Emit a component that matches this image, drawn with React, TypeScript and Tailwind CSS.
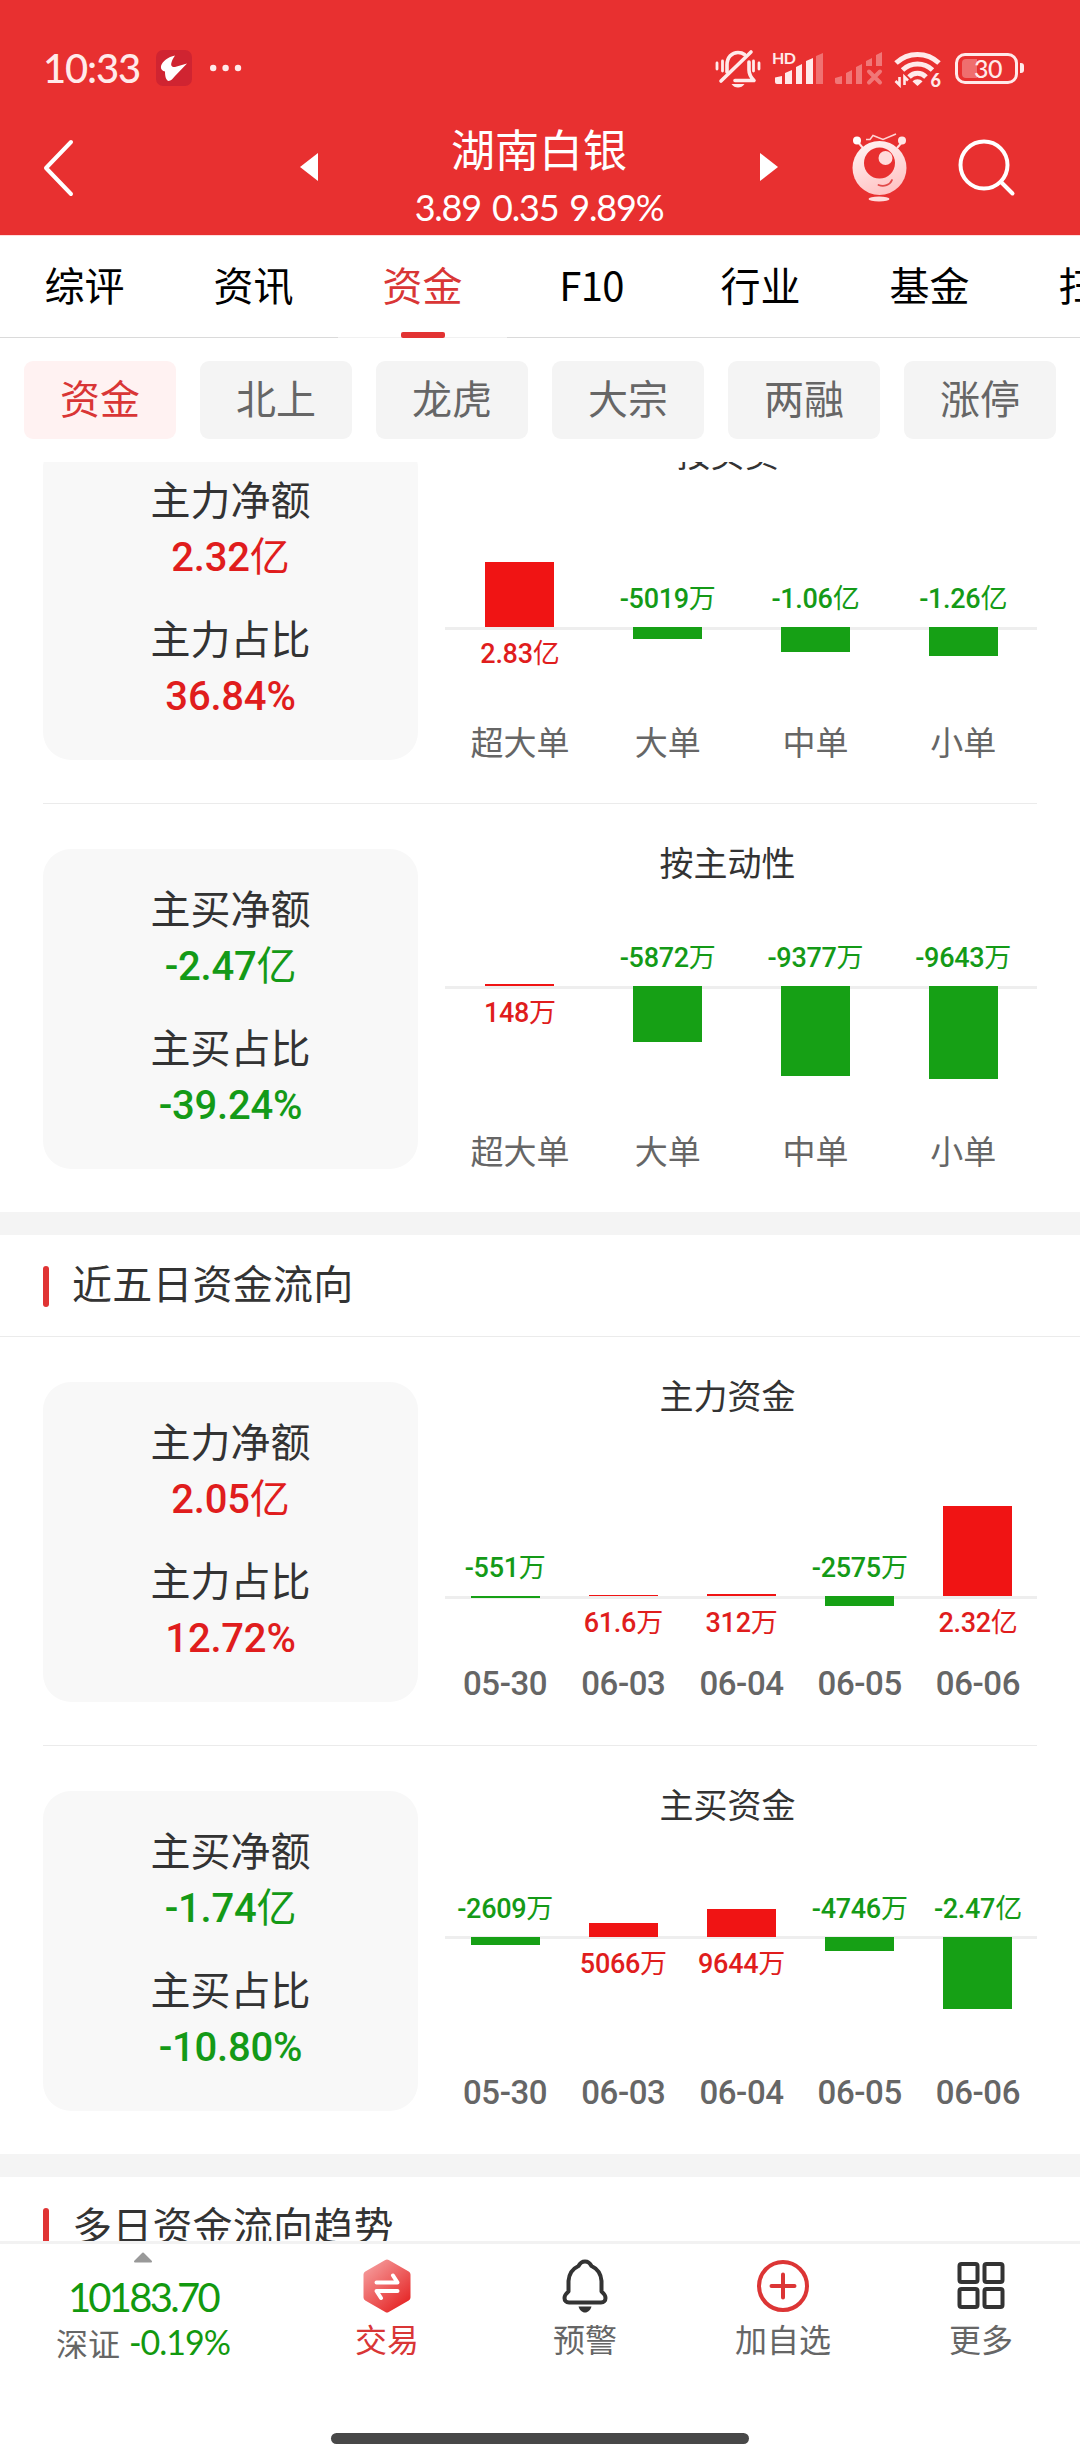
import React from "react";
import clsx from "clsx";

type Bar = {
  name: string;
  value: string;
  height: number;
};

type PanelData = {
  title: string;
  base: number;
  axis: number;
  stats: { label: string; value: string }[];
  bars: Bar[];
};

const tabs = ["综评", "资讯", "资金", "F10", "行业", "基金", "扫雷"];
const chips = ["资金", "北上", "龙虎", "大宗", "两融", "涨停"];

const todayPanels: PanelData[] = [
  {
    title: "按买卖",
    base: 158,
    axis: 158,
    stats: [
      { label: "主力净额", value: "2.32亿" },
      { label: "主力占比", value: "36.84%" },
    ],
    bars: [
      { name: "超大单", value: "2.83亿", height: 65.5 },
      { name: "大单", value: "-5019万", height: 11.5 },
      { name: "中单", value: "-1.06亿", height: 24.5 },
      { name: "小单", value: "-1.26亿", height: 29 },
    ],
  },
  {
    title: "按主动性",
    base: 108,
    axis: 108,
    stats: [
      { label: "主买净额", value: "-2.47亿" },
      { label: "主买占比", value: "-39.24%" },
    ],
    bars: [
      { name: "超大单", value: "148万", height: 2 },
      { name: "大单", value: "-5872万", height: 56 },
      { name: "中单", value: "-9377万", height: 90 },
      { name: "小单", value: "-9643万", height: 92.5 },
    ],
  },
];

const fiveDayPanels: PanelData[] = [
  {
    title: "主力资金",
    base: 185,
    axis: 185,
    stats: [
      { label: "主力净额", value: "2.05亿" },
      { label: "主力占比", value: "12.72%" },
    ],
    bars: [
      { name: "05-30", value: "-551万", height: 2 },
      { name: "06-03", value: "61.6万", height: 0.4 },
      { name: "06-04", value: "312万", height: 1.7 },
      { name: "06-05", value: "-2575万", height: 10 },
      { name: "06-06", value: "2.32亿", height: 90 },
    ],
  },
  {
    title: "主买资金",
    base: 117.5,
    axis: 116,
    stats: [
      { label: "主买净额", value: "-1.74亿" },
      { label: "主买占比", value: "-10.80%" },
    ],
    bars: [
      { name: "05-30", value: "-2609万", height: 7.5 },
      { name: "06-03", value: "5066万", height: 14.5 },
      { name: "06-04", value: "9644万", height: 28 },
      { name: "06-05", value: "-4746万", height: 13.5 },
      { name: "06-06", value: "-2.47亿", height: 71.5 },
    ],
  },
];

const isDown = (value: string) => value.startsWith("-");

// digits are heavier than the 万 / 亿 unit
function Amount({ value, className }: { value: string; className?: string }) {
  const unit = value.match(/[万亿]$/)?.[0];
  return (
    <div
      className={clsx(
        "font-['Roboto','Noto_Sans_CJK_SC',sans-serif] font-medium whitespace-nowrap",
        isDown(value) ? "text-[#149a17]" : "text-[#e01d1d]",
        className
      )}
    >
      {unit ? value.slice(0, -1) : value}
      {unit && <span className="font-normal">{unit}</span>}
    </div>
  );
}

function StatusBar() {
  return (
    <div className="flex h-[100px] items-start justify-between pt-[48px] pr-[56px] pl-[43px] text-[#ffeaea]">
      <div className="flex h-10 items-center">
        <span className="w-[113px] font-['Lato',sans-serif] text-[40px] leading-10 font-medium tracking-[-1.2px]">10:33</span>
        <svg width="36" height="36" viewBox="0 0 36 36">
          <rect width="36" height="36" rx="7" fill="#d02431" />
          <path
            d="M19 5.500C12 7 6.500 11 5 16C4.500 20 7 21 9 21.500C9 25 9.500 30 12.500 31C15 31 17 28.500 19 26L31 13.500L19 17C16 17.500 14.500 15.500 15.500 12.500C16 10 17.500 8 19 5.500Z"
            fill="#fff"
          />
        </svg>
        <svg className="ml-[18px]" width="32" height="8" viewBox="0 0 32 8" fill="currentColor">
          <circle cx="3.200" cy="4" r="3.200" />
          <circle cx="15.600" cy="4" r="3.200" />
          <circle cx="28" cy="4" r="3.200" />
        </svg>
      </div>

      <div className="flex h-10 items-center">
        {/* muted bell */}
        <svg width="46" height="40" viewBox="0 0 46 40" fill="none" stroke="currentColor" strokeWidth="3.600" strokeLinecap="round">
          <path d="M12 24V17C12 9 17 4.500 23 4.500C25.500 4.500 28 5.300 29.500 6.500" />
          <path d="M34 14V22C34 26 35.500 29 39 32.500H20" strokeLinejoin="round" />
          <path d="M6 33L36 4" />
          <path d="M2 15V21M7.500 13V23M38.500 13V23M44 15V21" strokeWidth="2.800" />
          <path d="M16.500 36H29.500C28 38.500 25.500 39.500 23 39.500C20.500 39.500 18 38.500 16.500 36Z" fill="currentColor" stroke="none" />
        </svg>
        <svg className="ml-[11px]" width="52" height="40" viewBox="0 0 52 40" fill="currentColor">
          <text x="0" y="16" fontSize="16" fontWeight="700" fontFamily="Lato, sans-serif" textLength="24">HD</text>
          <path d="M3 29.500L10 28V36H5Q3 36 3 34ZM13 25L20 22V36H13ZM24 19L30 16V36H24ZM34 13L41 10V36H34Z" />
          <path d="M44 8L51 5V36H44Z" opacity=".35" />
        </svg>
        <svg className="ml-[10px]" width="50" height="40" viewBox="0 0 50 40" fill="currentColor" opacity=".38">
          <path d="M1 30L8 28V36H3Q1 36 1 34ZM12 25L18 22V36H12ZM22 19L28 16V36H22ZM32 13L38 10V18H32ZM42 7L48 4V18H42Z" />
          <path d="M35 23.500L46 34.500M46 23.500L35 34.500" stroke="currentColor" strokeWidth="4" strokeLinecap="round" />
        </svg>
        <svg className="ml-[10px]" width="48" height="40" viewBox="0 0 48 40" fill="none" stroke="currentColor" strokeWidth="5">
          <path d="M2 15C14 3.500 33 3.500 45 15" />
          <path d="M8.500 22C17 14 30 14 38.500 22" />
          <path d="M15 29C20 24 27 24 32 29" />
          <path d="M18.500 33.500L23.500 38L28.500 33.500C26 30.500 21 30.500 18.500 33.500Z" fill="currentColor" stroke="none" />
          <path d="M1.500 33L5.500 37V29M10.500 37V29L14 32.500" strokeWidth="2.600" />
          <text x="36.500" y="38.500" fontSize="18" fontWeight="900" stroke="none" fill="currentColor" fontFamily="Lato, sans-serif">6</text>
        </svg>
        <div className="ml-[13px] flex h-[31px] w-[63px] items-center rounded-[10px] border-3 border-current pl-1">
          <span className="h-[19px] w-[15px] rounded-l-[4px] bg-white/30" />
          <span className="-ml-[3px] font-['Lato',sans-serif] text-[25px] leading-[30px] font-medium tracking-[-0.5px]">30</span>
        </div>
        <span className="ml-[2px] h-[10px] w-[4px] rounded-r-[3px] bg-current" />
      </div>
    </div>
  );
}

function RobotIcon() {
  return (
    <svg width="56" height="70" viewBox="0 0 56 70" fill="none">
      <defs>
        <linearGradient id="robot" x1="18" y1="12" x2="38" y2="64" gradientUnits="userSpaceOnUse">
          <stop stopColor="#ffeeee" />
          <stop offset="1" stopColor="#ffbfc0" />
        </linearGradient>
      </defs>
      <path d="M14 6.500H18L21 2.500L31 6.500L44 1" stroke="#ffd3d3" strokeWidth="1.500" />
      <path d="M5 8L11 15M51 8L45 15" stroke="#ffe2e2" strokeWidth="2" />
      <circle cx="5" cy="7.500" r="4" fill="#fff" />
      <circle cx="50" cy="7.500" r="4" fill="#ffe6e6" />
      <circle cx="27.500" cy="35" r="27" fill="url(#robot)" />
      <circle cx="27.500" cy="30" r="15.500" fill="#e83030" />
      <circle cx="33.500" cy="25" r="7" fill="#ffdcdc" />
      <path d="M26.500 52C32 54 38 52 40 47" stroke="#e24a4a" strokeWidth="1.800" strokeLinecap="round" />
      <ellipse cx="27" cy="66" rx="10.500" ry="2.500" fill="#ffdada" />
    </svg>
  );
}

function Header() {
  return (
    <header className="h-[236px] border-b border-[#ffdcdc] bg-[#e83030] text-white">
      <StatusBar />
      <div className="flex h-[135px] items-start pl-[42px]">
        <svg className="mt-[39px]" width="34" height="58" viewBox="0 0 34 58" fill="none" stroke="currentColor" strokeWidth="4" strokeLinecap="round" strokeLinejoin="round">
          <path d="M29 3L4 29L29 55" />
        </svg>
        <svg className="mt-[52px] ml-[224px]" width="18" height="30" viewBox="0 0 18 30" fill="currentColor">
          <path d="M18 1V29L0 15Z" />
        </svg>
        <div className="flex w-[442px] flex-col items-center pt-[24px]">
          <h1 className="text-[44px] leading-[48px]">湖南白银</h1>
          <p className="mt-[15px] font-['Lato',sans-serif] text-[36px] leading-[40px] tracking-[-1.2px] [word-spacing:3px]">3.89 0.35 9.89%</p>
        </div>
        <svg className="mt-[52px]" width="18" height="30" viewBox="0 0 18 30" fill="currentColor">
          <path d="M0 1V29L18 15Z" />
        </svg>
        <div className="mt-[33px] ml-[74px]">
          <RobotIcon />
        </div>
        <svg className="mt-[37px] ml-[49px]" width="60" height="60" viewBox="0 0 60 60" fill="none" stroke="currentColor" strokeWidth="4" strokeLinecap="round">
          <circle cx="27" cy="28" r="23.500" />
          <path d="M44 45L55.500 56.500" />
        </svg>
      </div>
    </header>
  );
}

function Tabs() {
  return (
    <nav className="flex h-[102px] overflow-hidden text-[40px] leading-none text-black">
      {tabs.map((tab) => {
        const active = tab === "资金";
        return (
          <div
            key={tab}
            className={clsx(
              "flex w-[169px] shrink-0 flex-col items-center justify-between border-b pt-[28px]",
              active ? "border-[#f1f1f1] text-[#d93636]" : "border-[#dadada]"
            )}
          >
            <span className={clsx(tab === "F10" && "tracking-[-0.6px]")}>{tab}</span>
            {active && <span className="-mb-px h-[6px] w-[44px] rounded-[2px] bg-[#e23333]" />}
          </div>
        );
      })}
    </nav>
  );
}

function Chips() {
  return (
    <div className="flex h-[124px] gap-6 px-6 pt-[23px]">
      {chips.map((chip, i) => (
        <div
          key={chip}
          className={clsx(
            "flex h-[78px] w-[152px] items-center justify-center rounded-[9px] pb-[6px] text-[40px] leading-none",
            i === 0 ? "bg-[#fff2f2] text-[#d93636]" : "bg-[#f4f4f4] text-[#666]"
          )}
        >
          {chip}
        </div>
      ))}
    </div>
  );
}

function BarChart({ title, base, axis, bars }: Omit<PanelData, "stats">) {
  return (
    <div className="flex h-[320px] w-[620px] flex-col">
      <h3 className="h-[29px] text-center text-[34px] leading-[25px] text-[#333]">{title}</h3>
      <div className="relative ml-[27px] flex h-[255px] pl-px">
        <div className="absolute inset-x-0 h-[3px] bg-[#eee]" style={{ top: axis }} />
        {bars.map((bar) => {
          const down = isDown(bar.value);
          return (
            <div key={bar.name} className="relative flex flex-1 flex-col items-center">
              <div className="flex flex-col items-center justify-end" style={{ height: base }}>
                {down ? (
                  <Amount value={bar.value} className="mb-[10px] text-[27px] leading-9 tracking-[-0.3px]" />
                ) : (
                  <div className="w-[69px] bg-[#f01414]" style={{ height: bar.height }} />
                )}
              </div>
              {down ? (
                <div className="w-[69px] bg-[#16a015]" style={{ height: bar.height }} />
              ) : (
                <Amount value={bar.value} className="mt-[9px] text-[27px] leading-9 tracking-[-0.3px]" />
              )}
            </div>
          );
        })}
      </div>
      <div className="ml-[27px] flex pl-px text-[#666]">
        {bars.map((bar) => (
          <div
            key={bar.name}
            className={clsx(
              "flex-1 text-center whitespace-nowrap",
              bars.length === 5
                ? "pt-[4px] font-['Roboto',sans-serif] text-[33px] leading-9 font-medium tracking-[-0.4px]"
                : "pt-px text-[33px] leading-8"
            )}
          >
            {bar.name}
          </div>
        ))}
      </div>
    </div>
  );
}

function Panel({ stats, ...chart }: PanelData) {
  return (
    <div className="flex px-[43px] pt-[45px] pb-[43px]">
      <div className="flex h-[320px] w-[375px] shrink-0 flex-col items-center rounded-[28px] bg-[#f8f8f8] pt-[36px]">
        {stats.map((stat) => (
          <div key={stat.label} className="mb-[29px] flex flex-col items-center">
            <span className="h-[54px] text-[40px] leading-[44px] text-[#333]">{stat.label}</span>
            <Amount value={stat.value} className="text-[40px] leading-[56px] tracking-[-0.2px]" />
          </div>
        ))}
      </div>
      <BarChart {...chart} />
    </div>
  );
}

function PanelList({ panels }: { panels: PanelData[] }) {
  return (
    <>
      {panels.map((panel, i) => (
        <React.Fragment key={panel.title}>
          {i > 0 && <div className="mx-[43px] h-px bg-[#ebebeb]" />}
          <Panel {...panel} />
        </React.Fragment>
      ))}
    </>
  );
}

function SectionTitle({ children }: { children: React.ReactNode }) {
  return (
    <>
      <div className="h-[23px] bg-[#f4f4f4]" />
      <div className="flex h-[102px] items-start border-b border-[#ebebeb] pt-[31px] pl-[43px]">
        <span className="h-[41px] w-[6px] rounded-[3px] bg-[#e03434]" />
        <h2 className="ml-[23px] text-[40px] leading-[32px] tracking-[0.2px] text-[#333]">{children}</h2>
      </div>
    </>
  );
}

function NavItem({ label, className, children }: { label: string; className?: string; children: React.ReactNode }) {
  return (
    <div className={clsx("flex w-[198px] flex-col items-center pt-[13px]", className)}>
      {children}
      <span className="mt-[5px] text-[32px] leading-9">{label}</span>
    </div>
  );
}

function BottomNav() {
  return (
    <footer className="flex h-[219px] flex-col justify-between border-t-3 border-[#f2f2f2] bg-white pb-[16px]">
      <div className="flex">
        <div className="flex w-[288px] flex-col items-center pt-[8px] pr-[2px]">
          <svg width="20" height="12" viewBox="0 0 20 12">
            <path d="M10 1.500L18 9.500H2Z" fill="#999" stroke="#999" strokeWidth="2" strokeLinejoin="round" />
          </svg>
          <div className="mt-[11px] font-['Lato',sans-serif] text-[40px] leading-[44px] tracking-[-2.7px] text-[#12990f]">10183.70</div>
          <div className="mt-px flex items-center gap-[9px] text-[32px] leading-[44px]">
            <span className="text-[#666]">深证</span>
            <span className="font-['Lato',sans-serif] text-[34px] tracking-[-1px] text-[#12990f]">-0.19%</span>
          </div>
        </div>
        <NavItem label="交易" className="text-[#d93636]">
          <svg width="54" height="58" viewBox="0 0 54 58" fill="none">
            <defs>
              <linearGradient id="trade" x1="8" y1="8" x2="44" y2="48" gradientUnits="userSpaceOnUse">
                <stop stopColor="#f59a9a" />
                <stop offset="1" stopColor="#e62a2a" />
              </linearGradient>
            </defs>
            <path d="M27 6L47 17.500V40.500L27 52L7 40.500V17.500Z" fill="url(#trade)" stroke="url(#trade)" strokeWidth="7" strokeLinejoin="round" />
            <path d="M16.500 25.500H37.500L33 18.500M37.500 34H16.500L21 41" stroke="#fff" strokeWidth="4" strokeLinecap="round" strokeLinejoin="round" />
          </svg>
        </NavItem>
        <NavItem label="预警" className="text-[#666]">
          <svg width="54" height="58" viewBox="0 0 54 58" fill="none" stroke="#333" strokeWidth="4" strokeLinejoin="round">
            <path d="M27 4.500C24 4.500 22 6 20.500 9C14 12 11 17 10.500 24V34.500C7.500 37 6.500 38.500 6.500 41C6.500 43.500 8 45.500 11 45.500H43C46 45.500 47.500 43.500 47.500 41C47.500 38.500 46.500 37 43.500 34.500V24C43 17 40 12 33.500 9C32 6 30 4.500 27 4.500Z" />
            <path d="M20.500 49.500H33.500C32.500 53 30 55.500 27 55.500C24 55.500 21.500 53 20.500 49.500Z" fill="#333" stroke="none" />
          </svg>
        </NavItem>
        <NavItem label="加自选" className="text-[#666]">
          <svg width="54" height="58" viewBox="0 0 54 58" fill="none" stroke="#dc3535" strokeWidth="4" strokeLinecap="round">
            <circle cx="27" cy="29" r="24" />
            <path d="M27 17.500V40.500M15.500 29H38.500" />
          </svg>
        </NavItem>
        <NavItem label="更多" className="text-[#666]">
          <svg width="54" height="58" viewBox="0 0 54 58" fill="none" stroke="#333" strokeWidth="4">
            <rect x="5.500" y="7" width="18" height="18" rx="2" />
            <rect x="30.500" y="7" width="18" height="18" rx="2" />
            <rect x="5.500" y="32" width="18" height="18" rx="2" />
            <rect x="30.500" y="32" width="18" height="18" rx="2" />
          </svg>
        </NavItem>
      </div>
      <div className="mx-auto h-[11px] w-[418px] rounded-full bg-[#484848]" />
    </footer>
  );
}

export default function App() {
  return (
    <div className="flex h-[2460px] w-[1080px] flex-col overflow-hidden bg-white font-['Noto_Sans_CJK_SC',sans-serif]">
      <Header />
      <Tabs />
      <Chips />
      <main className="h-[1779px] overflow-hidden">
        <div className="-mt-[67px]">
          <PanelList panels={todayPanels} />
          <SectionTitle>近五日资金流向</SectionTitle>
          <PanelList panels={fiveDayPanels} />
          <SectionTitle>多日资金流向趋势</SectionTitle>
        </div>
      </main>
      <BottomNav />
    </div>
  );
}
